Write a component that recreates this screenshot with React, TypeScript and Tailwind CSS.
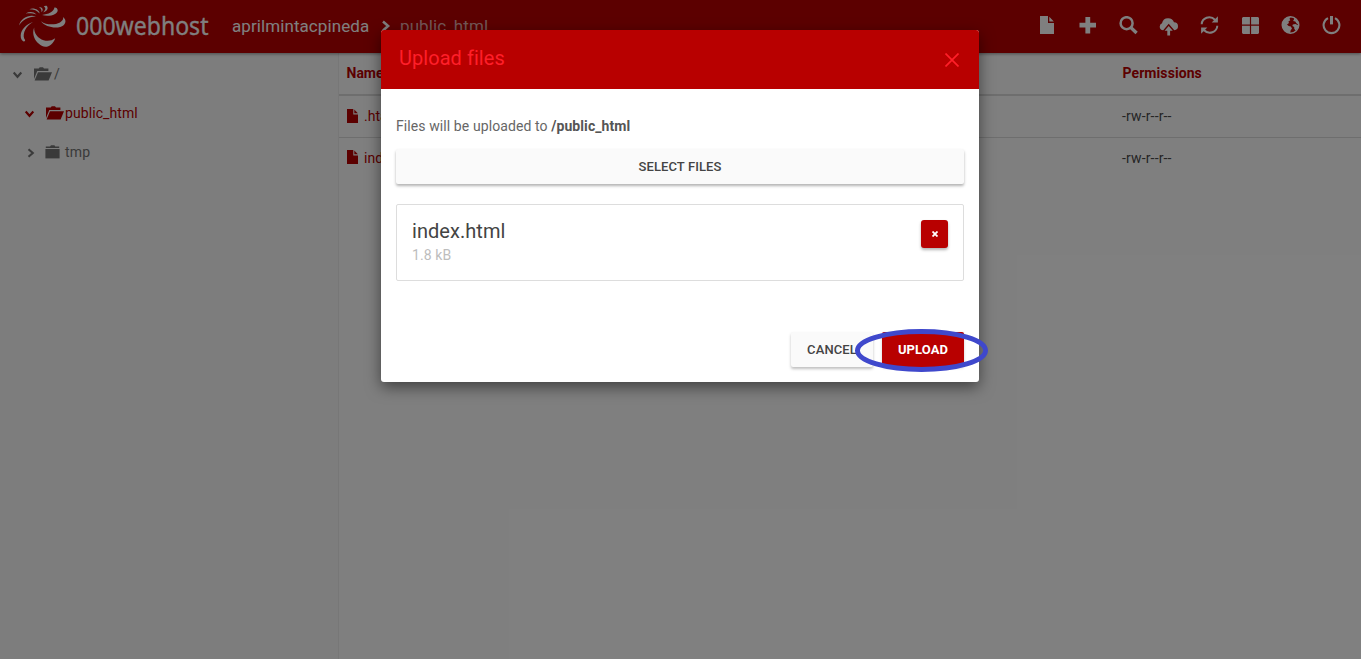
import React from "react";

type IconProps = { className?: string };

function Logo() {
  return (
    <svg className="h-[42px] w-[48px] shrink-0" viewBox="18 5 48 42" fill="#fff">
      <path d="M41 21.2C46 25.2 55 25.2 60 22.400C63 20.600 63.600 18.800 62.900 17C66 19 66.300 22.600 63.600 25.200C58.500 29.400 45.500 27.600 41 21.200Z" />
      <path d="M34.200 27.500C33.600 33 38 38.600 43.600 40.200C48 41.300 52 40.600 55.200 38.200C53.500 43.600 49.300 46.900 45.300 46.800C37 45.400 30.800 35.600 34.200 27.500Z" />
      <path d="M33 22C26 24.400 21 29.500 20.700 35.500C20.600 38.400 21.600 40.600 23.600 41.400C26 41.600 25.200 40 24.200 38.600C22.200 33 26.500 25.500 33 22Z" />
      <path d="M36 16.400C29 14.200 21 17.800 19 25.400C22.500 19.600 28 16.600 36 16.400Z" />
      <path d="M36.500 14.400C33.500 11.400 29.500 11.200 25.600 13.400C30 12.800 33 13.400 36.500 14.400Z" />
      <path d="M39.600 13.600C39.600 10 34 7.400 29.400 9.200C33.800 9.200 37.400 10.600 39.600 13.600Z" />
      <path d="M41.500 12.200C43.800 9.800 42.600 7.200 38.800 7C40.800 8.200 41.800 9.600 41.500 12.200Z" />
      <path d="M43.200 12.400C47.800 11 48.600 8 46.600 5.800C45.600 5.400 44.400 5.800 43.800 6.600C46.200 8 45.600 10 43.200 12.400Z" />
      <path d="M42 15C48.400 14.400 54 11.800 54.400 7.600C56 7.200 57.600 8.400 57.700 10.400C57.600 14.400 49.500 17 42 15Z" />
    </svg>
  );
}

function FileIcon({ className }: IconProps) {
  return (
    <svg className={className} viewBox="0 0 14 18" preserveAspectRatio="none" fill="currentColor">
      <path d="M0 0H8V7H14V18H0Z" />
      <path d="M9.300 .7L13.800 5.600H9.300Z" />
    </svg>
  );
}

function ChevronIcon({ className }: IconProps) {
  return (
    <svg className={className} viewBox="0 0 8 10" fill="none" stroke="currentColor" strokeWidth="2.100">
      <path d="M1.500 1.200L5.800 5L1.500 8.800" />
    </svg>
  );
}

function FolderOpenIcon({ className }: IconProps) {
  return (
    <svg className={className} viewBox="0 0 18 14" fill="currentColor">
      <path d="M0 12V1.600H4.700L5.700 .3H9L10 1.600H14.400V4H3.300Z" />
      <path d="M4 5.200H18L14.600 13.400H.6Z" />
    </svg>
  );
}

function FolderIcon({ className }: IconProps) {
  return (
    <svg className={className} viewBox="0 0 15 14" fill="currentColor">
      <path d="M.8 1.400H5L6 .2H9.400L10.300 1.400H14.200V3H.8Z" />
      <path d="M.4 4H14.600V13.400H.4Z" />
    </svg>
  );
}

const toolbar: { name: string; art: React.ReactNode }[] = [
  { name: "New file", art: <path d="M3 0H11V7H17V18H3ZM12.300 .7L16.800 5.600H12.300Z" /> },
  { name: "New folder", art: <path d="M7.400 1h4.800v5.800h5.800v4.700h-5.800v5.900H7.400v-5.900H1.500V6.800h5.900Z" /> },
  {
    name: "Search",
    art: (
      <g fill="none" stroke="currentColor">
        <circle cx="7.600" cy="7.200" r="6" strokeWidth="2.500" />
        <path d="M11.800 11.500L17.600 17" strokeWidth="3.300" />
      </g>
    ),
  },
  {
    name: "Upload",
    art: (
      <>
        <path d="M4.200 14.200A3.700 3.700 0 0 1 .7 10.700A3.800 3.800 0 0 1 3 7.300A6.300 6.300 0 0 1 9 2.200A6.300 6.300 0 0 1 15 6.200A4.100 4.100 0 0 1 19 10.300A3.900 3.900 0 0 1 15.300 14.200L9.700 7.800Z" />
        <path d="M9.700 9.900L13.800 14.800H11.100V19.500H8.300V14.800H5.600Z" />
      </>
    ),
  },
  {
    name: "Refresh",
    art: (
      <>
        <g fill="none" stroke="currentColor" strokeWidth="2">
          <path d="M1.700 8.200C2 2 10 -1.400 15.200 4" />
          <path d="M17.300 9.800C17 16 9 19.400 3.800 14" />
        </g>
        <path d="M17.900 .3V6.500H11.700Z" />
        <path d="M1.100 17.700V11.500H7.300Z" />
      </>
    ),
  },
  { name: "View", art: <path d="M2 1H8.900V8.500H1V2ZM10.100 1H17L18 2V8.500H10.100ZM1 9.700H8.900V18H2L1 17ZM10.100 9.700H18V17L17 18H10.100Z" /> },
  {
    name: "Website",
    art: (
      <>
        <circle cx="9.500" cy="9" r="8.200" fill="none" stroke="currentColor" strokeWidth="1.600" />
        <path d="M1.300 8C1.800 3.500 5 .8 9.800 .8L8.500 2.800L9.300 4.200L7.400 5.400L8 7L6 8.600L7.600 10L9.800 10.500L11 12.600L9.600 14.400L9.200 17.200C4.500 17.200 1 13 1.300 8Z" />
        <path d="M13 1.800L16.600 5L17.600 8.400L15.400 7.200L14.300 5.600L12 5L12.900 3.700Z" />
        <path d="M11.800 8.500L14.400 8L17.500 9.400L16.800 12.400L14.400 14.600L13.200 12.600L13.200 10.900L11.400 10.100Z" />
      </>
    ),
  },
  {
    name: "Log out",
    art: (
      <g fill="none" stroke="currentColor" strokeWidth="2.100">
        <path d="M6 2.100A7.900 7.900 0 1 0 13 2.100" />
        <path d="M9.500 0V8.400" strokeWidth="3" />
      </g>
    ),
  },
];

function Header() {
  return (
    <header className="z-10 flex h-[53px] shrink-0 items-start bg-[#b80000] text-white shadow-[0_1px_3px_rgba(0,0,0,0.4)]">
      <div className="flex w-[232px] items-start pt-[5px] pl-[18px]">
        <Logo />
        <svg className="ml-[10px] h-[40px] w-[136px] overflow-visible" viewBox="0 0 136 40">
          <text
            x="0"
            y="30"
            fill="#fff"
            stroke="#fff"
            strokeWidth="0.300"
            fontSize="26"
            textLength="132.500"
            lengthAdjust="spacingAndGlyphs"
            fontFamily="Noto Sans, sans-serif"
          >
            000webhost
          </text>
        </svg>
      </div>
      <nav className="flex items-center pt-[13px] text-[17px] leading-[26px]">
        <span className="w-[138px] tracking-[0.080px]">aprilmintacpineda</span>
        <ChevronIcon className="mr-[9px] ml-[11px] h-[12px] w-[10px]" />
        <span className="tracking-[0.080px] text-white/70">public_html</span>
      </nav>
      <div className="ml-auto flex gap-[21.700px] pt-[16px] pr-[20px]">
        {toolbar.map((t) => (
          <button key={t.name} aria-label={t.name} className="h-[20px] w-[19px]">
            <svg className="h-[20px] w-[19px]" viewBox="0 0 19 20" fill="currentColor">
              {t.art}
            </svg>
          </button>
        ))}
      </div>
    </header>
  );
}

function Sidebar() {
  return (
    <aside className="w-[339px] shrink-0 border-r border-[#eee] bg-[#fafafa] pt-[2px] text-[14px] text-[#757575]">
      <div className="flex h-[39px] items-center pl-[13px]">
        <ChevronIcon className="h-[10px] w-[9px] rotate-90" />
        <FolderOpenIcon className="mr-[2px] mb-[2px] ml-[12px] h-[14px] w-[18px]" />
        <span>/</span>
      </div>
      <div className="flex h-[39px] items-center pl-[25px] text-[#b80000]">
        <ChevronIcon className="h-[10px] w-[9px] rotate-90" />
        <FolderOpenIcon className="mr-[1px] mb-[2px] ml-[12px] h-[14px] w-[18px]" />
        <span className="tracking-[0.080px]">public_html</span>
      </div>
      <div className="flex h-[39px] items-center pl-[27px]">
        <ChevronIcon className="h-[10px] w-[8px]" />
        <FolderIcon className="mr-[5px] mb-[2px] ml-[10px] h-[14px] w-[15px]" />
        <span className="tracking-[0.150px]">tmp</span>
      </div>
    </aside>
  );
}

function FileTable() {
  return (
    <main className="flex-1 text-[14px]">
      <div className="flex h-[43px] items-center border-b-2 border-[#ddd] pl-[7.500px] font-bold text-[#b80000]">
        <span className="w-[776px]">Name</span>
        <span className="tracking-[0.080px]">Permissions</span>
      </div>
      {[".htaccess", "index.html"].map((name) => (
        <div key={name} className="flex h-[42px] items-center border-b border-[#ddd] pl-[8px] last:h-[40px] last:border-0">
          <span className="flex w-[775px] items-center gap-[6px] text-[#b80000]">
            <FileIcon className="mb-[2px] h-[14px] w-[11px]" />
            {name}
          </span>
          <span className="tracking-[0.150px] text-[#4a4a4a]">-rw-r--r--</span>
        </div>
      ))}
    </main>
  );
}

function UploadDialog() {
  return (
    <section
      role="dialog"
      className="relative h-[352px] w-[598px] rounded-[3px] bg-white text-[14px] text-[#666] shadow-[0_5px_15px_rgba(0,0,0,0.5)]"
    >
      <div className="flex h-[59px] items-center justify-between rounded-t-[3px] bg-[#b80000] pr-[20px] pl-[18px] text-[#ff1f29]">
        <h2 className="pb-[3px] text-[20px] tracking-[0.050px]">Upload files</h2>
        <svg className="h-[14px] w-[14px]" viewBox="0 0 14 14" stroke="currentColor" strokeWidth="1.700">
          <path d="M.5 .5L13.500 13.500M13.500 .5L.5 13.500" />
        </svg>
      </div>
      <div className="px-[15px] pt-[27px]">
        <p className="leading-[20px] tracking-[0.090px]">
          Files will be uploaded to <b className="text-[#555]">/public_html</b>
        </p>
        <button className="mt-[13px] h-[35px] w-full rounded-[2px] bg-[#fafafa] text-[13px] font-medium tracking-[0.100px] text-[#444] shadow-[0_2px_3px_rgba(0,0,0,0.300)]">
          SELECT FILES
        </button>
        <div className="mt-[20px] flex h-[77px] items-start justify-between rounded-[2px] border border-[#ddd] px-[15px] pt-[14px]">
          <div>
            <div className="text-[20px] leading-[24px] tracking-[0.050px] text-[#444]">index.html</div>
            <div className="mt-[2px] leading-[20px] tracking-[0.100px] text-[#bdbdbd]">1.8 kB</div>
          </div>
          <button
            aria-label="Remove file"
            className="mt-[1px] flex h-[28px] w-[27px] items-center justify-center rounded-[3px] bg-[#b80000] text-white shadow-[0_2px_3px_rgba(0,0,0,0.300)]"
          >
            <svg className="h-[6px] w-[6px]" viewBox="0 0 6 6" stroke="currentColor" strokeWidth="1.800">
              <path d="M.5 .5L5.500 5.500M5.500 .5L.5 5.500" />
            </svg>
          </button>
        </div>
        <div className="mt-[51px] flex justify-end gap-[9px] text-[13px]">
          <button className="h-[35px] w-[82px] rounded-[2px] bg-[#fafafa] font-medium tracking-[0.100px] text-[#444] shadow-[0_2px_3px_rgba(0,0,0,0.250)]">
            CANCEL
          </button>
          <button className="h-[35px] w-[82px] rounded-[2px] bg-[#b80000] font-bold tracking-[0.100px] text-white shadow-[0_1px_3px_rgba(0,0,0,0.200)]">
            UPLOAD
          </button>
        </div>
      </div>
      <svg className="absolute top-[298px] left-[473px] h-[44px] w-[136px]" viewBox="0 0 136 44" fill="none">
        <ellipse cx="67.500" cy="22.500" rx="64" ry="19" stroke="#3f48cc" strokeWidth="5" />
      </svg>
    </section>
  );
}

export default function App() {
  return (
    <div className="relative h-[659px] w-[1361px] overflow-hidden bg-white font-[Roboto,sans-serif]">
      <div className="flex h-full flex-col">
        <Header />
        <div className="flex flex-1">
          <Sidebar />
          <FileTable />
        </div>
      </div>
      <div className="absolute inset-0 z-20 flex items-start bg-black/50 pt-[30px] pl-[381px]">
        <UploadDialog />
      </div>
    </div>
  );
}
